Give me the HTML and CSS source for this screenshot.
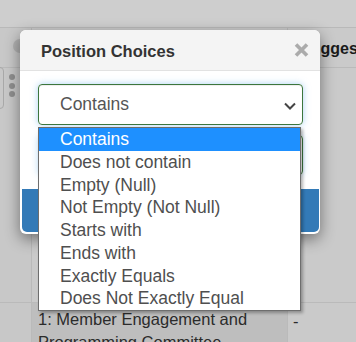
FILE: index.html
```html
<!DOCTYPE html>
<html>
<head>
<meta charset="utf-8">
<link rel="stylesheet" href="styles.css">
</head>
<body>
<div class="page">
  <div class="topbar"></div>
  <div class="grid">
    <div class="cell c1 head"><span class="handle"></span></div>
    <div class="cell c2 head"></div>
    <div class="cell c3 head"><span class="colname">Suggested</span></div>
    <div class="cell c1 mid">
      <div class="tool"></div>
      <div class="dots"><span></span><span></span><span></span></div>
    </div>
    <div class="cell c2 mid"></div>
    <div class="cell c3 mid"></div>
    <div class="cell c1 row"></div>
    <div class="cell c2 row dark"><p class="celltext">1: Member Engagement and Programming Committee</p></div>
    <div class="cell c3 row"><p class="celltext dash">-</p></div>
  </div>

  <div class="modal">
    <div class="modal-head">
      <h4 class="modal-title">Position Choices</h4>
      <span class="close">
        <svg width="15" height="14" viewBox="0 0 15 14"><path d="M2 1.5 L13 12.5 M13 1.5 L2 12.5" stroke="#ababab" stroke-width="3.6" fill="none"/></svg>
      </span>
    </div>
    <div class="modal-body">
      <div class="select">
        <span class="select-value">Contains</span>
        <svg class="chev" width="12" height="8" viewBox="0 0 12 8"><path d="M1 1.5 L6 6.5 L11 1.5" stroke="#444" stroke-width="2" fill="none"/></svg>
      </div>
      <div class="input"></div>
    </div>
    <div class="modal-foot"><div class="btn"></div></div>
  </div>

  <ul class="dropdown">
    <li class="opt active">Contains</li>
    <li class="opt">Does not contain</li>
    <li class="opt">Empty (Null)</li>
    <li class="opt">Not Empty (Not Null)</li>
    <li class="opt">Starts with</li>
    <li class="opt">Ends with</li>
    <li class="opt">Exactly Equals</li>
    <li class="opt">Does Not Exactly Equal</li>
  </ul>
</div>
</body>
</html>
```
FILE: styles.css
```css
* { box-sizing: border-box; }
html, body { margin: 0; padding: 0; }
body {
  width: 356px;
  height: 342px;
  overflow: hidden;
  background: #cacaca;
  font-family: "Liberation Sans", Arial, sans-serif;
}
.page {
  position: relative;
  width: 356px;
  height: 342px;
  overflow: hidden;
}
.topbar {
  height: 28px;
  background: #cecece;
  border-bottom: 1px solid #b9b9b9;
}
.grid {
  display: grid;
  grid-template-columns: 31px 255px 1fr;
  grid-template-rows: 39px 234px 60px;
  column-gap: 1px;
  row-gap: 1px;
  background: #bababa;
}
.cell { background: #cacaca; position: relative; }
.c1 { background: #c8c8c8; }
.dark { background: #bebebe; }
.head.c3 { padding: 12px 0 0 12px; }
.colname {
  font-weight: bold;
  font-size: 16px;
  line-height: 18px;
  color: #1a1a1a;
  white-space: nowrap;
}
.handle {
  position: absolute;
  left: 13px;
  top: 11px;
  width: 14px;
  height: 14px;
  border-radius: 50%;
  background: #b1b1b1;
}
.mid.c1 { display: flex; flex-direction: column; }
.tool {
  position: absolute;
  left: -12px;
  top: -1px;
  width: 16px;
  height: 42px;
  border: 1px solid #a9a9a9;
  border-radius: 4px;
}
.dots {
  position: absolute;
  left: 9px;
  top: 6px;
  display: flex;
  flex-direction: column;
  gap: 2.5px;
}
.dots span {
  width: 6px;
  height: 6px;
  border-radius: 50%;
  background: #8f8f8f;
}
.celltext {
  margin: 0;
  padding: 5px 0 0 6px;
  font-size: 16.5px;
  line-height: 23px;
  color: #2b2b2b;
}
.dash { padding-left: 5px; padding-top: 7px; }

.modal {
  position: absolute;
  left: 20px;
  top: 30px;
  width: 300px;
  height: 204px;
  background: #fff;
  border-radius: 6px;
  box-shadow: 0 5px 15px rgba(0,0,0,0.45);
  display: flex;
  flex-direction: column;
}
.modal-head {
  height: 41px;
  background: #f4f4f4;
  border-bottom: 1px solid #e2e2e2;
  border-radius: 6px 6px 0 0;
  display: flex;
  padding: 12px 11px 0 21px;
}
.modal-title {
  margin: 0;
  font-size: 16.5px;
  line-height: 19px;
  font-weight: bold;
  color: #333;
  flex: 1;
}
.close { margin-top: 1px; height: 14px; display: block; }
.close svg { display: block; }
.modal-body {
  padding: 13px 17px 0 18px;
  display: flex;
  flex-direction: column;
  gap: 10px;
}
.select {
  height: 41px;
  border: 1px solid #3c763d;
  border-radius: 4px;
  box-shadow: inset 0 1px 1px rgba(0,0,0,0.075), 0 0 7px rgba(102,175,233,0.55);
  display: flex;
  align-items: center;
  padding: 0 6px 0 21px;
}
.select-value {
  flex: 1;
  font-size: 17.5px;
  color: #555;
}
.chev { display: block; margin-top: 2px; }
.input {
  height: 40px;
  border: 1px solid #3c763d;
  border-radius: 4px;
  box-shadow: 0 0 7px rgba(102,175,233,0.45);
}
.modal-foot {
  margin-top: auto;
  padding: 0 1px 2px 2px;
}
.btn {
  height: 43px;
  background: #337ab7;
  border-radius: 0 0 5px 5px;
}

.dropdown {
  position: absolute;
  left: 38px;
  top: 127px;
  width: 263px;
  margin: 0;
  padding: 0;
  list-style: none;
  background: #fff;
  border: 1px solid #6e6e6e;
  box-shadow: 2px 2px 3px rgba(0,0,0,0.3);
}
.opt {
  height: 22.75px;
  line-height: 22.75px;
  padding-left: 21px;
  font-size: 17.5px;
  color: #4f4f4f;
  white-space: nowrap;
}
.opt.active {
  background: #1e90ff;
  color: #fff;
}
```
